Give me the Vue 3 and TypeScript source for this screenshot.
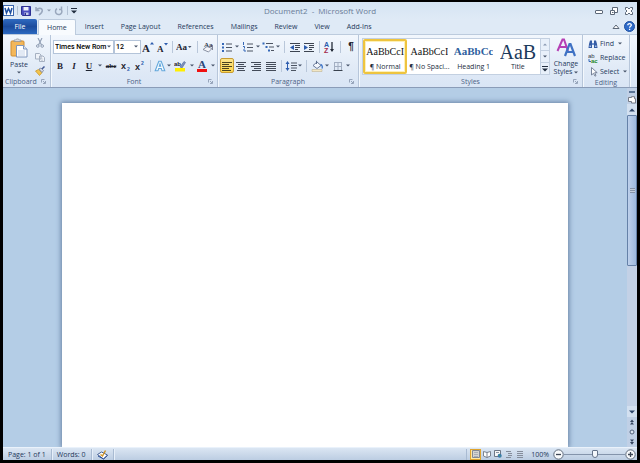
<script setup lang="ts">
import { ref } from 'vue'

interface Tool {
  icon?: string
  glyph?: string
  label?: string
  size: string
  look?: string
  kind?: 'sep' | 'drop'
}

const sep = (size = 'w6'): Tool => ({ kind: 'sep', size })
const drop = (label: string, size = 'w6'): Tool => ({ kind: 'drop', label, size })

const tabs = ['Home', 'Insert', 'Page Layout', 'References', 'Mailings', 'Review', 'View', 'Add-Ins']
const activeTab = ref('Home')

const fontTop: Tool[] = [
  { icon: 'grow', label: 'Grow Font', size: 'w14' },
  { icon: 'shrink', label: 'Shrink Font', size: 'w14' },
  sep(),
  { icon: 'case', label: 'Change Case', size: 'w18' },
  sep('w8'),
  { icon: 'clear', label: 'Clear Formatting', size: 'w14' },
]
const fontBottom: Tool[] = [
  { glyph: 'B', label: 'Bold', size: 'w14', look: 'bold' },
  { glyph: 'I', label: 'Italic', size: 'w14', look: 'italic' },
  { glyph: 'U', label: 'Underline', size: 'w16', look: 'under' },
  drop('Underline options'),
  { glyph: 'abc', label: 'Strikethrough', size: 'w16', look: 'strike' },
  { icon: 'sub', label: 'Subscript', size: 'w14' },
  { icon: 'sup', label: 'Superscript', size: 'w14' },
  sep(),
  { icon: 'effects', label: 'Text Effects', size: 'w14' },
  drop('Text effect options', 'w4'),
  { icon: 'highlight', label: 'Highlight', size: 'w18' },
  drop('Highlight colours'),
  { icon: 'color', label: 'Font Color', size: 'w14' },
  drop('Font colours', 'w8'),
]
const paraTop: Tool[] = [
  { icon: 'bullets', label: 'Bullets', size: 'w14' },
  drop('Bullet options'),
  { icon: 'numbers', label: 'Numbering', size: 'w16' },
  drop('Numbering options', 'w4'),
  { icon: 'multi', label: 'Multilevel List', size: 'w16' },
  drop('List options', 'w4'),
  sep('w8'),
  { icon: 'outdent', label: 'Decrease Indent', size: 'w14' },
  { icon: 'indent', label: 'Increase Indent', size: 'w14' },
  sep(),
  { icon: 'sort', label: 'Sort', size: 'w14' },
  sep('w8'),
  { glyph: '¶', label: 'Show marks', size: 'w14', look: 'pilcrow' },
]
const paraBottom: Tool[] = [
  { icon: 'left', label: 'Align Left', size: 'w14', look: 'on' },
  { icon: 'center', label: 'Center', size: 'w14' },
  { icon: 'right', label: 'Align Right', size: 'w16' },
  { icon: 'justify', label: 'Justify', size: 'w14' },
  sep(),
  { icon: 'spacing', label: 'Line Spacing', size: 'w14' },
  drop('Spacing options', 'w4'),
  sep('w8'),
  { icon: 'fill', label: 'Shading', size: 'w14' },
  drop('Shading options'),
  { icon: 'grid', label: 'Borders', size: 'w16' },
  drop('Border options', 'w4'),
]
const rows = { fontBottom, paraTop, paraBottom }

const styles = [
  { sample: 'AaBbCcI', name: '¶ Normal', look: 'body-look' },
  { sample: 'AaBbCcI', name: '¶ No Spaci...', look: 'body-look' },
  { sample: 'AaBbCc', name: 'Heading 1', look: 'head-look' },
  { sample: 'AaB', name: 'Title', look: 'title-look' },
]
const activeStyle = ref('¶ Normal')

const views = [
  { icon: 'v-print', label: 'Print Layout' },
  { icon: 'v-read', label: 'Full Screen Reading' },
  { icon: 'v-web', label: 'Web Layout' },
  { icon: 'v-outline', label: 'Outline' },
  { icon: 'v-draft', label: 'Draft' },
]
const activeView = ref('Print Layout')
const font = ref('Times New Rom')
const fontSize = ref('12')
const zoom = ref(50)
</script>

<template>
  <svg class="sprite" aria-hidden="true">
    <symbol id="word" viewBox="0 0 11 11"><rect x=".5" y=".5" width="10" height="10" fill="#fff" stroke="#3b67ad" /><path d="M2 3l1.500 5L5.500 3.500 7.500 8 9 3" fill="none" stroke="#1d4f9f" stroke-width="1.500" /></symbol>
    <symbol id="save" viewBox="0 0 10 10"><path d="M.5.5h9v9h-8l-1-1z" fill="#4a4fc0" stroke="#2d3193" /><path d="M2.500 1h5v3.500h-5z" fill="#eef2fb" /><path d="M3 6.500h4.500V9H3z" fill="#c5cdea" /><path d="M3.500 7h1.500v2H3.500z" fill="#2d3193" /></symbol>
    <symbol id="undo" viewBox="0 0 10 10"><path d="M2 1v3.500h3.500M2.300 4.200C4 1.500 8 1.500 8.300 4.500 8.400 6.500 7 7.500 5 9" fill="none" stroke="#9aa8bd" stroke-width="1.500" /></symbol>
    <symbol id="redo" viewBox="0 0 10 10"><path d="M7.500.5v3H5M7 3.200A3.200 3.200 0 1 1 3 2.700" fill="none" stroke="#9aa8bd" stroke-width="1.500" /></symbol>
    <symbol id="custom" viewBox="0 0 6 6"><path d="M0 0h6v1H0zM0 2.500h6L3 5.500z" fill="#222e40" /></symbol>
    <symbol id="arrow" viewBox="0 0 4 3"><path d="M0 .5h4L2 2.500z" fill="#46546a" /></symbol>
    <symbol id="min" viewBox="0 0 10 10"><rect x="1.500" y="4.500" width="7" height="3" rx=".5" fill="#fff" stroke="#5c6878" /></symbol>
    <symbol id="restore" viewBox="0 0 10 10"><path d="M3.500 1.500h5v5h-5z" fill="#fff" stroke="#5c6878" /><path d="M1.500 4.500h4v4h-4z" fill="#fff" stroke="#5c6878" /><path d="M3 6.500h1.500" stroke="#5c6878" /></symbol>
    <symbol id="close" viewBox="0 0 10 10"><path d="M1.500 1.500h2L5 3l1.500-1.500h2v2L7 5l1.500 1.500v2h-2L5 7 3.500 8.500h-2v-2L3 5 1.500 3.500z" fill="#fff" stroke="#5c6878" /></symbol>
    <symbol id="collapse" viewBox="0 0 8 8"><path d="M1 5.500L4 2l3 3.500z" fill="#fff" stroke="#5c6878" /></symbol>
    <symbol id="help" viewBox="0 0 11 11"><circle cx="5.500" cy="5.500" r="5" fill="#2e6bc9" stroke="#1d4fa0" /><path d="M3.800 4.200c0-2.200 3.500-2.200 3.500 0C7.300 5.400 5.600 5.300 5.600 6.800M5.600 7.800v1.200" fill="none" stroke="#fff" stroke-width="1.300" /></symbol>
    <symbol id="paste" viewBox="0 0 18 20"><rect x="1" y="3" width="13" height="15" rx="1" fill="#f3b75a" stroke="#d18e31" /><path d="M4 3.500h7V2H9.500C9 .5 6 .5 5.500 2H4z" fill="#d8dbe2" stroke="#8c8f96" stroke-width=".7" /><path d="M6.500 7.500h7l3.500 3.500v8H6.500z" fill="#fff" stroke="#7d95bd" /><path d="M13.500 7.500V11H17" fill="#dbe6f6" stroke="#7d95bd" /><path d="M8 13h7M8 15h7M8 17h7" stroke="#c5d4ea" /></symbol>
    <symbol id="cut" viewBox="0 0 10 10"><path d="M3 0l3.500 7M7 0L3.500 7" stroke="#8f9db3" stroke-width="1.100" fill="none" /><circle cx="2.800" cy="8" r="1.300" fill="none" stroke="#8f9db3" /><circle cx="7.200" cy="8" r="1.300" fill="none" stroke="#8f9db3" /></symbol>
    <symbol id="copy" viewBox="0 0 10 10"><path d="M.5 1.500h4l1.500 1.500v4H.5zM4.500 4h3.500L9.500 5.500v4h-5z" fill="#eef2f8" stroke="#a5b0c1" /><path d="M6 7h2M6 8.500h2" stroke="#b5bfce" stroke-width=".6" /></symbol>
    <symbol id="brush" viewBox="0 0 10 10"><path d="M.5 5l3-1.500 3.500 3.200L4.500 9.500z" fill="#f2c44d" stroke="#c68f1f" stroke-width=".7" /><path d="M4 3l2-1 2.500 2.500-1.500 2z" fill="#d4d8e4" stroke="#6c7894" stroke-width=".7" /><path d="M7 3l2.500-2.500" stroke="#445c97" stroke-width="1.500" /></symbol>
    <symbol id="launch" viewBox="0 0 5 5"><path d="M.5 3.500v-3h3M2 2l2 2M4.500 2v2.500H2" fill="none" stroke="#8594ac" stroke-width=".8" /></symbol>
    <symbol id="grow" viewBox="0 0 12 12"><text x="0" y="11" font-family="Liberation Serif, serif" font-size="11" font-weight="bold" fill="#1e2430">A</text><path d="M8 3.500h4L10 1z" fill="#2c5cae" /></symbol>
    <symbol id="shrink" viewBox="0 0 12 12"><text x="1" y="11" font-family="Liberation Serif, serif" font-size="9" font-weight="bold" fill="#1e2430">A</text><path d="M8 2h4l-2 2.500z" fill="#2c5cae" /></symbol>
    <symbol id="case" viewBox="0 0 16 12"><text x="0" y="9" font-family="Liberation Serif, serif" font-size="9" font-weight="bold" fill="#1e2430">Aa</text><path d="M12 5h3.500L13.800 7z" fill="#46546a" /></symbol>
    <symbol id="clear" viewBox="0 0 12 12"><text x="2" y="6" font-family="Liberation Serif, serif" font-size="7" font-weight="bold" fill="#36404f">Aa</text><path d="M1 8.500l4-3 5 2-3.500 3.500z" fill="#f4f5fa" stroke="#7c8497" stroke-width=".9" /><path d="M10.500 4v5" stroke="#7c8497" /></symbol>
    <symbol id="sub" viewBox="0 0 12 12"><text x="1" y="9" font-family="Liberation Sans, sans-serif" font-size="9" font-weight="bold" fill="#1e2430">x</text><text x="7" y="11" font-family="Liberation Sans, sans-serif" font-size="5" font-weight="bold" fill="#2c5cae">2</text></symbol>
    <symbol id="sup" viewBox="0 0 12 12"><text x="1" y="10" font-family="Liberation Sans, sans-serif" font-size="9" font-weight="bold" fill="#1e2430">x</text><text x="7" y="5" font-family="Liberation Sans, sans-serif" font-size="5" font-weight="bold" fill="#2c5cae">2</text></symbol>
    <symbol id="effects" viewBox="0 0 12 12"><path d="M1.200 10.800L4.800 1.200h2.400l3.600 9.600H8L7.300 8.500H4.700L4 10.800zM5.300 6.300h1.400L6 4z" fill="#f5fbff" stroke="#64a8dc" stroke-width="1.100" /></symbol>
    <symbol id="highlight" viewBox="0 0 12 12"><text x="0" y="6" font-family="Liberation Sans, sans-serif" font-size="6" font-weight="bold" fill="#1e2430">ab</text><path d="M6 7l4-5.500 1.500 1L8 8z" fill="#7e93bf" stroke="#405586" stroke-width=".5" /><path d="M1 8h10v3.500H1z" fill="#ffee00" /></symbol>
    <symbol id="color" viewBox="0 0 12 12"><text x="2" y="8" font-family="Liberation Serif, serif" font-size="11" font-weight="bold" fill="#2a4679">A</text><path d="M1 9h10v3H1z" fill="#f01010" /></symbol>
    <symbol id="bullets" viewBox="0 0 12 12"><path d="M1 2h2v2H1zM1 5.500h2v2H1zM1 9h2v2H1z" fill="#3568b8" /><path d="M5 3h6M5 6.500h6M5 10h6" stroke="#4d5563" /></symbol>
    <symbol id="numbers" viewBox="0 0 12 12"><path d="M1.500 1v3M1 5.500h1.500v2M1 9h2v2" fill="none" stroke="#3568b8" /><path d="M5 3h6M5 6.500h6M5 10h6" stroke="#4d5563" /></symbol>
    <symbol id="multi" viewBox="0 0 12 12"><path d="M.5 1.500h2v2h-2zM3.500 5h2v2h-2zM6 8.500h2v2H6z" fill="#3568b8" /><path d="M4 2.500h7M7 6h5M9 9.500h3" stroke="#4d5563" /></symbol>
    <symbol id="outdent" viewBox="0 0 12 12"><path d="M1 2.500h10M6 4.500h5M6 6.500h5M6 8.500h3M1 10.500h10" stroke="#3d4451" /><path d="M5 4v5L1 6.500z" fill="#2c5cae" /></symbol>
    <symbol id="indent" viewBox="0 0 12 12"><path d="M1 2.500h10M6 4.500h5M6 6.500h5M6 8.500h3M1 10.500h10" stroke="#3d4451" /><path d="M1 4v5l4-2.500z" fill="#2c5cae" /></symbol>
    <symbol id="sort" viewBox="0 0 12 12"><text x="1" y="6" font-family="Liberation Sans, sans-serif" font-size="7" font-weight="bold" fill="#2c5cae">A</text><text x="1" y="12" font-family="Liberation Sans, sans-serif" font-size="7" font-weight="bold" fill="#a32a4c">Z</text><path d="M9 1v9" stroke="#252c38" stroke-width="1.300" /><path d="M7 8h4l-2 3z" fill="#252c38" /></symbol>
    <symbol id="left" viewBox="0 0 12 12"><path d="M1 2.500h10M1 4.500h7M1 6.500h10M1 8.500h7M1 10.500h9" stroke="#4b4420" /></symbol>
    <symbol id="center" viewBox="0 0 12 12"><path d="M1 2.500h10M3 4.500h6M1 6.500h10M3 8.500h6M2 10.500h8" stroke="#434b59" /></symbol>
    <symbol id="right" viewBox="0 0 12 12"><path d="M1 2.500h10M4 4.500h7M1 6.500h10M4 8.500h7M2 10.500h9" stroke="#434b59" /></symbol>
    <symbol id="justify" viewBox="0 0 12 12"><path d="M1 2.500h10M1 4.500h10M1 6.500h10M1 8.500h10M1 10.500h10" stroke="#434b59" /></symbol>
    <symbol id="spacing" viewBox="0 0 12 12"><path d="M2.500 2v8" stroke="#2c5cae" /><path d="M.5 4l2-3 2 3zM.5 8l2 3 2-3z" fill="#2c5cae" /><path d="M6 3h6M6 5.500h6M6 8h6M6 10.500h5" stroke="#4d5563" /></symbol>
    <symbol id="fill" viewBox="0 0 12 12"><path d="M2 5.500L6 2l4 3.500L6 8.500z" fill="#f4f7fd" stroke="#5b6d8e" stroke-width=".9" /><path d="M5.500 4V.8" stroke="#5b6d8e" /><path d="M9.500 4.500c2 .5 2 2.500 1.500 4" fill="none" stroke="#3973c9" stroke-width="1.300" /><path d="M1 9.500h10v2H1z" fill="#f3e7c4" stroke="#b6aa86" stroke-width=".5" /></symbol>
    <symbol id="grid" viewBox="0 0 12 12"><path d="M2 2.500h8M2.500 2v8M9.500 2v8M6 2v8M2 6.500h8" stroke="#a3afc2" fill="none" /><path d="M1.500 10.500h9" stroke="#39424f" /></symbol>
    <symbol id="change" viewBox="0 0 20 20"><path d="M1.500 13L6.500 1.500h1.500L12 13M3.500 9h7" fill="none" stroke="#b53fb5" stroke-width="2" /><path d="M9 18l4.500-12h1L19 18M10.500 14h7" fill="none" stroke="#3f72c4" stroke-width="2.200" /></symbol>
    <symbol id="find" viewBox="0 0 10 10"><path d="M1 5l1-3.500h2V9H.5zM6 1.500h2L9 5l.5 4H6z" fill="#345ba4" /><path d="M4 4h2v2H4z" fill="#6f93cf" /><path d="M1.500 6.500h1.500V8H1.500zM7 6.500h1.500V8H7z" fill="#a8c2ea" /></symbol>
    <symbol id="replace" viewBox="0 0 10 10"><text x="0" y="5" font-family="Liberation Sans, sans-serif" font-size="6" fill="#343c4a">ab</text><text x="3" y="10" font-family="Liberation Sans, sans-serif" font-size="6" font-weight="bold" fill="#248a2b">ac</text><path d="M1 6v2.500h2" stroke="#3568b8" fill="none" /></symbol>
    <symbol id="select" viewBox="0 0 10 10"><path d="M3.500.5v7.500l2-1.700L7 9.200l1-.6L6.700 5.700h2.500z" fill="#fff" stroke="#6b7890" stroke-width=".9" /></symbol>
    <symbol id="up" viewBox="0 0 6 4"><path d="M0 3.500h6L3 .5z" fill="#2d4468" /></symbol>
    <symbol id="down" viewBox="0 0 6 4"><path d="M0 .5h6L3 3.500z" fill="#2d4468" /></symbol>
    <symbol id="ruler" viewBox="0 0 8 8"><path d="M.5 1.500h3V.7h3v2h1V7h-4V5.500h-3z" fill="#fff" stroke="#6b6f7b" stroke-width=".9" /></symbol>
    <symbol id="dblup" viewBox="0 0 6 6"><path d="M1 3l2-2.500L5 3zM1 5.500h4L3 3z" fill="#35455f" /></symbol>
    <symbol id="dbldown" viewBox="0 0 6 6"><path d="M1 .5h4L3 3zM1 3h4L3 5.700z" fill="#35455f" /></symbol>
    <symbol id="ball" viewBox="0 0 6 6"><circle cx="3" cy="3" r="2" fill="#dce6f2" stroke="#51617b" /></symbol>
    <symbol id="proof" viewBox="0 0 11 10"><path d="M.5 5l4-2.500 6 3-4 4z" fill="#fff" stroke="#445f92" /><path d="M1 6.500l5.500 3 4-3.500" fill="none" stroke="#2c4f96" /><path d="M3.500 5l2 1.500L8.500 1" fill="none" stroke="#cf9428" stroke-width="1.500" /></symbol>
    <symbol id="v-print" viewBox="0 0 8 8"><path d="M.5.5h7v7h-7z" fill="#d4d4d0" stroke="#828894" /><path d="M2 2.500h4M2 4.500h4M2 6.500h4" stroke="#9a9fa9" stroke-width=".7" /></symbol>
    <symbol id="v-read" viewBox="0 0 8 8"><path d="M.5 1.500L4 2.500l3.500-1v4.500L4 7.500.5 6zM4 2.500v5" fill="#fff" stroke="#6d7686" stroke-width=".9" /></symbol>
    <symbol id="v-web" viewBox="0 0 8 8"><path d="M.5.5h6v6h-6z" fill="#f5f6f8" stroke="#6d7686" /><path d="M2 2.500h3" stroke="#8b93a1" /><circle cx="5.700" cy="5.700" r="2" fill="#3778b0" /><path d="M5 5l1.500 1" stroke="#4ca65b" /></symbol>
    <symbol id="v-outline" viewBox="0 0 8 8"><path d="M1 1.500h5M3 3.500h4M3 5.500h4M1 7.500h5" stroke="#858d9b" /></symbol>
    <symbol id="v-draft" viewBox="0 0 8 8"><path d="M1 1.500h6M1 3.500h6M1 5.500h6M1 7.500h6" stroke="#858d9b" /></symbol>
    <symbol id="minus" viewBox="0 0 11 11"><circle cx="5.500" cy="5.500" r="4.700" fill="#f8fafc" stroke="#5f6b7c" /><path d="M3 5.500h5" stroke="#3c4654" stroke-width="1.300" /></symbol>
    <symbol id="plus" viewBox="0 0 11 11"><circle cx="5.500" cy="5.500" r="4.700" fill="#f8fafc" stroke="#5f6b7c" /><path d="M3 5.500h5M5.500 3v5" stroke="#3c4654" stroke-width="1.300" /></symbol>
  </svg>

  <div class="window">
    <header class="titlebar">
      <div class="quick">
        <svg class="i11"><use href="#word" /></svg>
        <i class="rule"></i>
        <button aria-label="Save"><svg class="i10"><use href="#save" /></svg></button>
        <button class="undo" aria-label="Undo"><svg class="i10"><use href="#undo" /></svg><svg class="arrow pale"><use href="#arrow" /></svg></button>
        <button aria-label="Repeat"><svg class="i10"><use href="#redo" /></svg></button>
        <i class="rule"></i>
        <button aria-label="Customize toolbar"><svg class="i6"><use href="#custom" /></svg></button>
      </div>
      <h1>Document2&nbsp; -&nbsp; Microsoft Word</h1>
      <div class="controls">
        <button aria-label="Minimize"><svg class="i10"><use href="#min" /></svg></button>
        <button aria-label="Restore"><svg class="i10"><use href="#restore" /></svg></button>
        <button aria-label="Close"><svg class="i10"><use href="#close" /></svg></button>
      </div>
    </header>

    <nav class="tabs">
      <button class="file">File</button>
      <button v-for="t in tabs" :key="t" class="tab" :class="{ current: t === activeTab }" @click="activeTab = t">{{ t }}</button>
      <span class="grow"></span>
      <button aria-label="Collapse ribbon"><svg class="i8"><use href="#collapse" /></svg></button>
      <button class="help" aria-label="Help"><svg class="i11"><use href="#help" /></svg></button>
    </nav>

    <section class="ribbon">
      <div class="group clipboard">
        <div class="body">
          <button class="big"><svg class="paste"><use href="#paste" /></svg><span>Paste</span><svg class="arrow"><use href="#arrow" /></svg></button>
          <div class="stack">
            <button aria-label="Cut"><svg class="i10"><use href="#cut" /></svg></button>
            <button aria-label="Copy"><svg class="i10"><use href="#copy" /></svg></button>
            <button aria-label="Format Painter"><svg class="i10"><use href="#brush" /></svg></button>
          </div>
        </div>
        <footer><span>Clipboard</span><button aria-label="Clipboard settings"><svg class="i5"><use href="#launch" /></svg></button></footer>
      </div>

      <div class="group font">
        <div class="body rows">
          <div class="row">
            <label class="combo face"><select v-model="font" aria-label="Font"><option>Times New Rom</option></select><svg class="arrow"><use href="#arrow" /></svg></label>
            <label class="combo size"><select v-model="fontSize" aria-label="Font size"><option>12</option></select><svg class="arrow"><use href="#arrow" /></svg></label>
            <template v-for="(t, i) in fontTop" :key="i">
              <i v-if="t.kind === 'sep'" class="sep" :class="t.size"></i>
              <button v-else class="tool" :class="t.size" :aria-label="t.label"><svg :class="t.icon === 'case' ? 'wide' : 'i12'"><use :href="'#' + t.icon" /></svg></button>
            </template>
          </div>
          <div class="row">
            <template v-for="(t, i) in rows.fontBottom" :key="i">
              <i v-if="t.kind === 'sep'" class="sep" :class="t.size"></i>
              <button v-else-if="t.kind === 'drop'" class="tool" :class="t.size" :aria-label="t.label"><svg class="arrow"><use href="#arrow" /></svg></button>
              <button v-else class="tool" :class="[t.size, t.look]" :aria-label="t.label"><svg v-if="t.icon" class="i12"><use :href="'#' + t.icon" /></svg><template v-else>{{ t.glyph }}</template></button>
            </template>
          </div>
        </div>
        <footer><span>Font</span><button aria-label="Font settings"><svg class="i5"><use href="#launch" /></svg></button></footer>
      </div>

      <div class="group paragraph">
        <div class="body rows">
          <div v-for="(row, r) in [rows.paraTop, rows.paraBottom]" :key="r" class="row">
            <template v-for="(t, i) in row" :key="i">
              <i v-if="t.kind === 'sep'" class="sep" :class="t.size"></i>
              <button v-else-if="t.kind === 'drop'" class="tool" :class="t.size" :aria-label="t.label"><svg class="arrow"><use href="#arrow" /></svg></button>
              <button v-else class="tool" :class="[t.size, t.look]" :aria-label="t.label"><svg v-if="t.icon" class="i12"><use :href="'#' + t.icon" /></svg><template v-else>{{ t.glyph }}</template></button>
            </template>
          </div>
        </div>
        <footer><span>Paragraph</span><button aria-label="Paragraph settings"><svg class="i5"><use href="#launch" /></svg></button></footer>
      </div>

      <div class="group styles">
        <div class="body">
          <div class="gallery">
            <button v-for="s in styles" :key="s.name" class="card" :class="{ chosen: s.name === activeStyle }" @click="activeStyle = s.name">
              <span class="sample" :class="s.look">{{ s.sample }}</span>
              <span class="name">{{ s.name }}</span>
            </button>
            <div class="pager">
              <button aria-label="Previous styles" disabled><svg class="arrow pale"><use href="#up" /></svg></button>
              <button aria-label="Next styles"><svg class="arrow"><use href="#arrow" /></svg></button>
              <button aria-label="More styles"><svg class="i6"><use href="#custom" /></svg></button>
            </div>
          </div>
          <button class="big change"><svg class="i20"><use href="#change" /></svg><span>Change</span><span>Styles <svg class="arrow"><use href="#arrow" /></svg></span></button>
        </div>
        <footer><span>Styles</span><button aria-label="Styles settings"><svg class="i5"><use href="#launch" /></svg></button></footer>
      </div>

      <div class="group editing">
        <div class="body list">
          <button><svg class="i10"><use href="#find" /></svg>Find<svg class="arrow"><use href="#arrow" /></svg></button>
          <button><svg class="i10"><use href="#replace" /></svg>Replace</button>
          <button><svg class="i10"><use href="#select" /></svg>Select<svg class="arrow"><use href="#arrow" /></svg></button>
        </div>
        <footer><span>Editing</span></footer>
      </div>
    </section>

    <main class="workspace">
      <div class="canvas"><article class="page" contenteditable="true" aria-label="Document"></article></div>
      <aside class="scroll">
        <i class="split"></i>
        <button class="rulerbtn" aria-label="View Ruler"><svg class="i8"><use href="#ruler" /></svg></button>
        <button class="step" aria-label="Scroll up"><svg class="tri"><use href="#up" /></svg></button>
        <div class="track"><div class="thumb"><i></i></div></div>
        <button class="step" aria-label="Scroll down"><svg class="tri"><use href="#down" /></svg></button>
        <button class="jump" aria-label="Previous page"><svg class="i6"><use href="#dblup" /></svg></button>
        <button class="jump" aria-label="Browse object"><svg class="i6"><use href="#ball" /></svg></button>
        <button class="jump" aria-label="Next page"><svg class="i6"><use href="#dbldown" /></svg></button>
      </aside>
    </main>

    <footer class="status">
      <button class="cell">Page: 1 of 1</button>
      <button class="cell">Words: 0</button>
      <button class="cell" aria-label="Proofing"><svg class="i11"><use href="#proof" /></svg></button>
      <span class="grow"></span>
      <div class="views">
        <button v-for="v in views" :key="v.icon" :class="{ chosen: v.label === activeView }" :aria-label="v.label" @click="activeView = v.label"><svg class="i8"><use :href="'#' + v.icon" /></svg></button>
      </div>
      <button class="percent">100%</button>
      <button aria-label="Zoom out"><svg class="i11"><use href="#minus" /></svg></button>
      <input v-model="zoom" class="zoom" type="range" min="0" max="100" aria-label="Zoom" />
      <button aria-label="Zoom in"><svg class="i11"><use href="#plus" /></svg></button>
    </footer>
  </div>
</template>

<style>
body { margin: 0; background: #000; }
</style>

<style scoped>
* { box-sizing: border-box; }
svg { display: block; flex: none; }
.sprite { display: none; }
button { display: flex; align-items: center; justify-content: center; padding: 0; border: 0; background: none; color: inherit; font: inherit; white-space: nowrap; }
.i5 { width: 5px; height: 5px; }
.i6 { width: 6px; height: 6px; }
.i8 { width: 8px; height: 8px; }
.i10 { width: 10px; height: 10px; }
.i11 { width: 11px; height: 11px; }
.i12 { width: 12px; height: 12px; }
.i20 { width: 20px; height: 20px; }
.wide { width: 16px; height: 12px; }
.arrow { width: 4px; height: 3px; }
.pale { opacity: .5; }
.tri { width: 6px; height: 4px; }
.grow { flex: 1; }

.window { display: flex; flex-direction: column; height: 100vh; border: 3px solid #000; border-top-width: 2px; background: #dfe9f5; color: #1e395b; font: 500 7px/9px "Open Sans", "Noto Sans", sans-serif; overflow: hidden; }

.titlebar { display: grid; grid-template-columns: 1fr auto 1fr; align-items: center; height: 17px; background: linear-gradient(#d5e4f3, #dfeaf6); }
.titlebar h1 { margin: 0; color: #6a7c98; font: 400 8px/10px "Open Sans", "Noto Sans", sans-serif; }
.quick { display: flex; align-items: center; gap: 3px; }
.quick .rule { width: 1px; height: 9px; background: #b1c0d3; }
.undo { gap: 3px; width: 17px; }
.controls { display: flex; justify-content: flex-end; gap: 5px; padding-right: 3px; }

.tabs { display: flex; align-items: stretch; gap: 1px; height: 16px; border-bottom: 1px solid #bccbdd; background: #dfeaf6; }
.tab { padding: 0 8px; }
.tab.current { margin-bottom: -1px; padding: 0 8px; border: 1px solid #bccbdd; border-bottom: 0; border-radius: 2px 2px 0 0; background: #f8fbfe; }
.file { width: 34px; border-radius: 2px 2px 0 0; background: linear-gradient(#2f6ac0, #1c4c9d 50%, #2a68c0); color: #fff; }
.help { width: 16px; }

.ribbon { display: flex; height: 53px; border-bottom: 1px solid #8a9cb8; background: linear-gradient(#f2f7fd, #dfe9f6 70%, #d9e5f5); }
.group { display: flex; flex-direction: column; border-right: 1px solid #b7c6da; box-shadow: 1px 0 #f3f8fd; }
.body { display: flex; flex: 1; padding-top: 3px; }
.group footer { display: grid; grid-template-columns: 1fr auto 1fr; align-items: center; height: 11px; color: #4c6285; }
.group footer span { grid-column: 2; }
.group footer button { justify-self: end; padding-right: 4px; }
.clipboard { width: 48px; }
.clipboard footer { grid-template-columns: 0 auto 1fr; padding-left: 2px; }
.font { width: 167px; }
.paragraph { width: 141px; }
.styles { flex: 1; }
.editing { width: 47px; margin-right: 7px; }
.big { flex-direction: column; justify-content: flex-start; width: 32px; }
.big .arrow { margin-top: 2px; }
.paste { width: 18px; height: 20px; }
.clipboard .big span { margin-top: 2px; }
.stack { display: flex; flex-direction: column; gap: 4px; }
.rows { flex-direction: column; gap: 4px; padding: 4px 0 0 2px; }
.row { display: flex; align-items: center; height: 15px; }
.tool { height: 15px; color: #1e2430; }
.w4 { width: 4px; }
.w6 { width: 6px; }
.w8 { width: 8px; }
.w14 { width: 14px; }
.w16 { width: 16px; }
.w18 { width: 18px; }
.sep { align-self: stretch; background: linear-gradient(#b9c7da, #b9c7da) center / 1px 12px no-repeat; }
.bold, .italic, .under { font: 700 9px/12px "Liberation Serif", serif; }
.italic { font-style: italic; }
.under { text-decoration: underline; }
.strike { font: 700 7px/12px "Liberation Serif", serif; text-decoration: line-through; }
.pilcrow { font: 700 10px/12px "Liberation Sans", sans-serif; }
.on { border: 1px solid #c79c33; border-radius: 2px; background: linear-gradient(#fbe58d, #fdd64c); }
.combo { display: flex; align-items: center; height: 14px; border: 1px solid #b4c4d9; background: #fff; }
.combo select { flex: 1; min-width: 0; height: 12px; padding: 0 0 0 1px; border: 0; outline: 0; appearance: none; background: none; color: #000; font: 500 7px/12px Roboto, sans-serif; }
.combo .arrow { margin-right: 2px; }
.face { width: 61px; }
.size { width: 27px; }

.styles .body { padding-left: 3px; }
.gallery { display: flex; flex: 1; height: 37px; border: 1px solid #c3d0e1; background: #fff; }
.card { flex: 1 1 0; flex-direction: column; justify-content: flex-start; min-width: 0; overflow: hidden; border: 2px solid transparent; color: #222c3c; }
.card.chosen { border-color: #eec43f; border-radius: 2px; box-shadow: inset 0 0 0 1px #fdf0b8; }
.sample { display: flex; align-items: center; height: 21px; overflow: hidden; color: #111; }
.body-look { font: 10px/21px "Liberation Serif", serif; }
.head-look { color: #2f5f9e; font: 700 11px/21px "Liberation Serif", serif; }
.title-look { color: #1c3a5c; font: 20px/18px "Liberation Serif", serif; }
.name { line-height: 9px; }
.pager { display: flex; flex-direction: column; width: 9px; border-left: 1px solid #c3d0e1; background: #e8f0fa; }
.pager button { flex: 1; }
.pager button + button { border-top: 1px solid #c3d0e1; }
.change .i20 { margin-bottom: 2px; }
.change span { display: flex; align-items: center; gap: 2px; line-height: 8px; }
.change .arrow { margin-top: 0; }
.list { flex-direction: column; align-items: flex-start; padding-left: 5px; gap: 3px; }
.list button { gap: 2px; height: 11px; }
.list .arrow { margin-left: 2px; }

.workspace { display: flex; flex: 1; min-height: 0; background: #b4cde6; }
.canvas { display: flex; flex: 1; justify-content: center; padding-top: 15px; overflow: hidden; }
.page { width: 81%; background: #fff; box-shadow: 0 0 5px 1px #6780a3; outline: 0; }
.scroll { display: flex; flex-direction: column; align-items: stretch; width: 10px; background: #c0d0e6; color: #35455f; }
.split { height: 2px; margin: 3px 2px 2px; background: #5a7496; }
.rulerbtn { height: 9px; }
.step { height: 11px; background: #d3e0f0; }
.track { flex: 1; background: #c3d1e6; }
.thumb { display: flex; align-items: center; justify-content: center; height: 52%; border: 1px solid #6581a8; border-radius: 1px; background: linear-gradient(90deg, #bfd1ec, #9db9de); }
.thumb i { width: 5px; height: 5px; background: repeating-linear-gradient(#8593a8 0 1px, #c4cfdd 1px 2px); }
.jump { height: 10px; }

.status { display: flex; align-items: center; height: 13px; padding-right: 1px; border-top: 1px solid #eaf2fb; background: linear-gradient(#dbe6f3, #bccde2); }
.cell { height: 11px; padding: 0 5px; border-right: 1px solid #a9bbd2; box-shadow: 1px 0 #e6eff9; }
.views { display: flex; padding-left: 3px; border-left: 1px solid #a9bbd2; }
.views button { width: 11px; height: 11px; }
.views .chosen { border: 1px solid #dfa32d; background: #fde9a4; }
.percent { padding: 0 4px 0 6px; }
.zoom { width: 61px; height: 11px; margin: 0; appearance: none; background: linear-gradient(#8494ab, #8494ab) center / 100% 1px no-repeat; }
.zoom::-webkit-slider-thumb { width: 6px; height: 8px; appearance: none; border: 1px solid #66748a; border-radius: 1px 1px 3px 3px; background: #f5f8fc; }
</style>
